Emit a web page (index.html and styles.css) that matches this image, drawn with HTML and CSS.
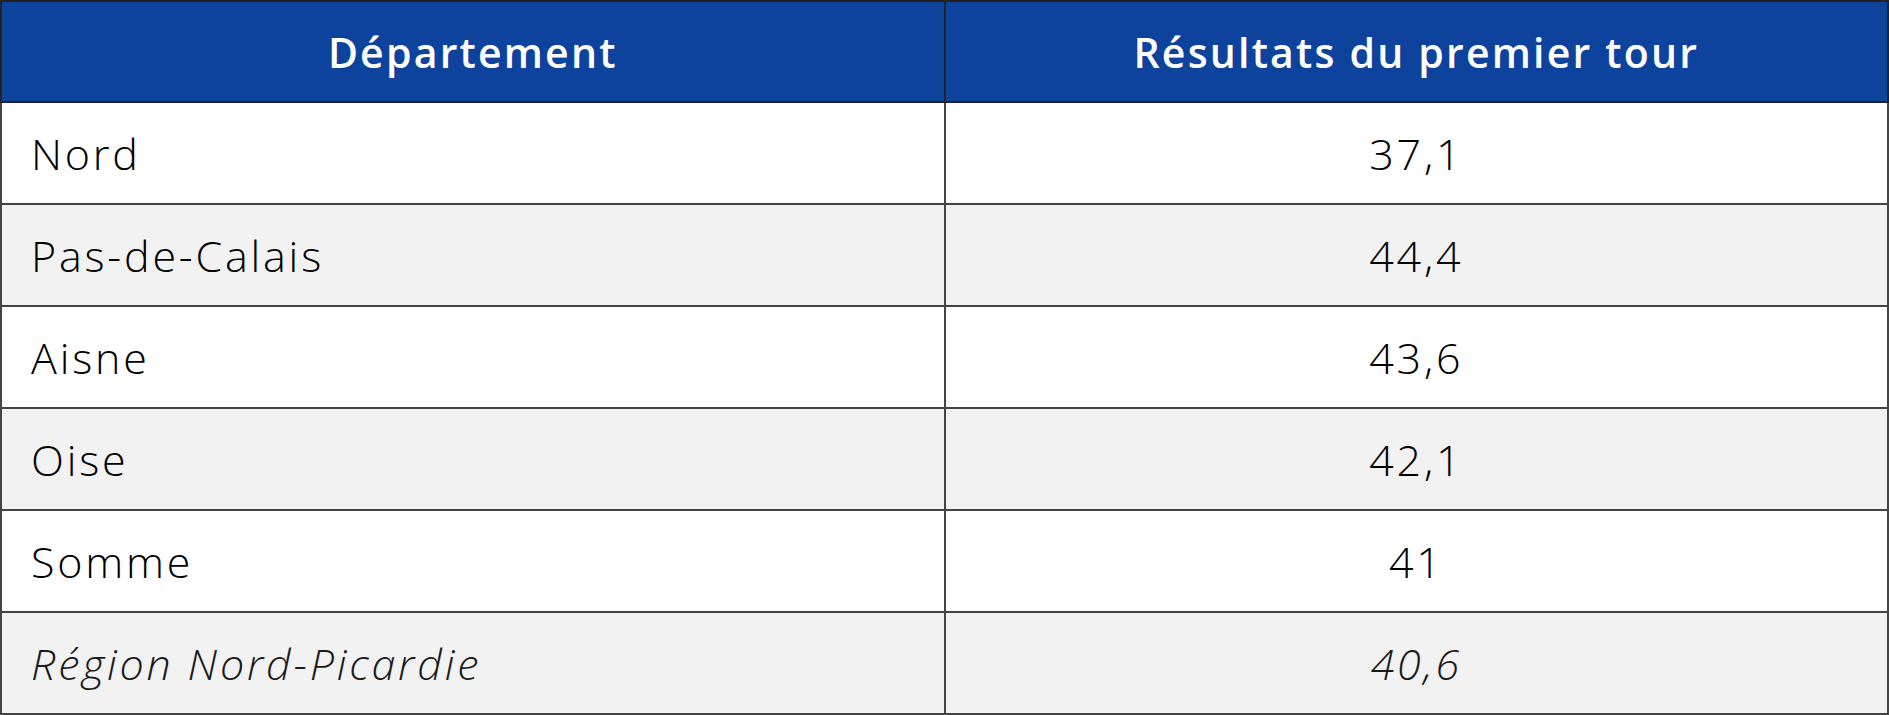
FILE: index.html
```html
<!DOCTYPE html>
<html lang="fr">
<head>
<meta charset="utf-8">
<link rel="stylesheet" href="styles.css">
</head>
<body>
<table class="results">
  <thead>
    <tr>
      <th>Département</th>
      <th>Résultats du premier tour</th>
    </tr>
  </thead>
  <tbody>
    <tr><td class="name">Nord</td><td class="val">37,1</td></tr>
    <tr class="alt"><td class="name">Pas-de-Calais</td><td class="val">44,4</td></tr>
    <tr><td class="name">Aisne</td><td class="val">43,6</td></tr>
    <tr class="alt"><td class="name">Oise</td><td class="val">42,1</td></tr>
    <tr><td class="name">Somme</td><td class="val">41</td></tr>
    <tr class="alt total"><td class="name">Région Nord-Picardie</td><td class="val">40,6</td></tr>
  </tbody>
</table>
</body>
</html>
```
FILE: styles.css
```css
html, body {
  margin: 0;
  padding: 0;
  background: #ffffff;
}
.results {
  width: 1889px;
  border-collapse: collapse;
  table-layout: fixed;
  font-family: "Open Sans", Lato, sans-serif;
}
.results th {
  background: #0e439d;
  color: #ffffff;
  font-weight: 600;
  font-size: 41px;
  letter-spacing: 2.2px;
  height: 99px;
  padding: 0;
  text-align: center;
  vertical-align: middle;
  border: 2px solid #222;
}
.results td {
  height: 100px;
  padding: 0;
  font-size: 43px;
  letter-spacing: 2.8px;
  font-weight: 300;
  color: #000;
  vertical-align: middle;
  border: 2px solid #444;
}
.results td.name {
  padding-left: 29px;
  text-align: left;
}
.results td.val {
  text-align: center;
}
.results tr.alt td {
  background: #f2f2f2;
}
.results tr.total td {
  font-style: italic;
  color: #1a1a1a;
}
```
